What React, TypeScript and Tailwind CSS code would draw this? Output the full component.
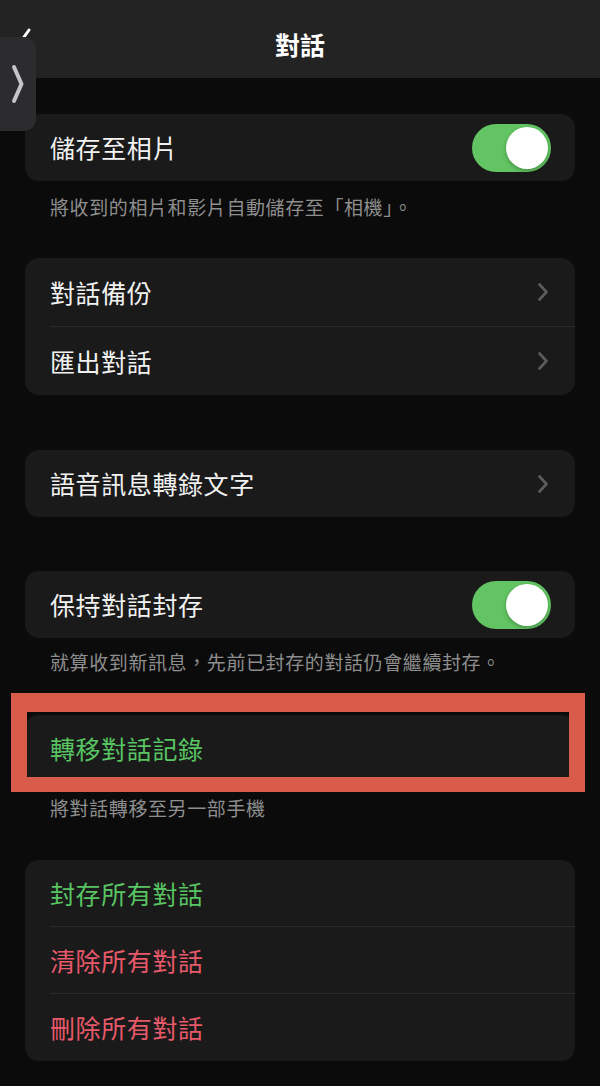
const font = { fontFamily: '"Noto Sans CJK TC", "Noto Sans", sans-serif' };

function Chevron() {
  return (
    <svg width="12" height="18" viewBox="0 0 12 18" className="shrink-0">
      <path d="M2.5 1.5 L9.5 9 L2.5 16.5" fill="none" stroke="#5c5c60" strokeWidth="2.6" strokeLinecap="round" strokeLinejoin="round" />
    </svg>
  );
}

function Toggle() {
  return (
    <div className="w-[79px] h-[48px] -mr-[2px] rounded-full bg-[#62c462] p-[3px] flex justify-end shrink-0">
      <div className="w-[42px] h-[42px] rounded-full bg-white shadow-[0_2px_4px_rgba(0,0,0,0.25)]" />
    </div>
  );
}

function Row({ label, right, color = "text-[#f2f2f2]", divider = false, h = "h-[67px]" }: { label: string; right?: React.ReactNode; color?: string; divider?: boolean; h?: string }) {
  return (
    <div className="pl-[25px]">
      <div className={`${h} flex items-center justify-between pr-[26px]`}>
        <span className={`text-[25px] leading-none tracking-[0.6px] ${color}`}>{label}</span>
        {right}
      </div>
      {divider && <div className="h-px bg-[#2a2a2a]" />}
    </div>
  );
}

function Card({ children, className = "" }: { children: React.ReactNode; className?: string }) {
  return <div className={`bg-[#1a1a1a] rounded-[14px] overflow-hidden ${className}`}>{children}</div>;
}

function Caption({ text, className = "" }: { text: string; className?: string }) {
  return <p className={`pl-[25px] text-[19px] leading-[26px] tracking-[0.6px] text-[#8e8e8e] ${className}`}>{text}</p>;
}

export default function App() {
  return (
    <div className="relative w-[600px] h-[1086px] overflow-hidden bg-[#0b0b0b]" style={font}>
      {/* header */}
      <div className="relative h-[78px] bg-[#232323] flex justify-center pt-[29px]">
        <svg width="20" height="34" viewBox="0 0 20 34" className="absolute left-[14px] top-[27px]">
          <path d="M15 3 L5 17 L15 31" fill="none" stroke="#ffffff" strokeWidth="3" strokeLinecap="round" strokeLinejoin="round" />
        </svg>
        <h1 className="text-[25px] leading-[30px] font-semibold text-white">對話</h1>
      </div>

      <div className="px-[25px]">
        <Card className="mt-[36px]">
          <Row label="儲存至相片" right={<Toggle />} />
        </Card>
        <Caption className="mt-[13px]" text="將收到的相片和影片自動儲存至「相機」。" />

        <Card className="mt-[38px]">
          <Row label="對話備份" right={<Chevron />} divider h="h-[68px]" />
          <Row label="匯出對話" right={<Chevron />} h="h-[68px]" />
        </Card>

        <Card className="mt-[55px]">
          <Row label="語音訊息轉錄文字" right={<Chevron />} />
        </Card>

        <Card className="mt-[54px]">
          <Row label="保持對話封存" right={<Toggle />} />
        </Card>
        <Caption className="mt-[11px]" text="就算收到新訊息，先前已封存的對話仍會繼續封存。" />

        <Card className="mt-[40px]">
          <Row label="轉移對話記錄" color="text-[#58c462]" />
        </Card>
        <Caption className="mt-[13px]" text="將對話轉移至另一部手機" />

        <Card className="mt-[39px]">
          <Row label="封存所有對話" color="text-[#58c462]" divider h="h-[66px]" />
          <Row label="清除所有對話" color="text-[#e8596a]" divider h="h-[66px]" />
          <Row label="刪除所有對話" color="text-[#e8596a]" />
        </Card>
      </div>

      {/* side handle */}
      <div className="absolute left-0 top-[37px] w-[36px] h-[94px] rounded-r-[12px] bg-[#2c2c2e] flex items-center justify-center">
        <svg width="14" height="42" viewBox="0 0 14 42">
          <path d="M3 4 L10.5 21 L3 38" fill="none" stroke="#c4c4ca" strokeWidth="4" strokeLinecap="round" strokeLinejoin="round" />
        </svg>
      </div>

      {/* highlight box */}
      <div className="absolute left-[11px] top-[693px] w-[574px] h-[99px] border-[16px] border-t-[19px] border-b-[15px] border-[#d95b4a]" />
    </div>
  );
}
